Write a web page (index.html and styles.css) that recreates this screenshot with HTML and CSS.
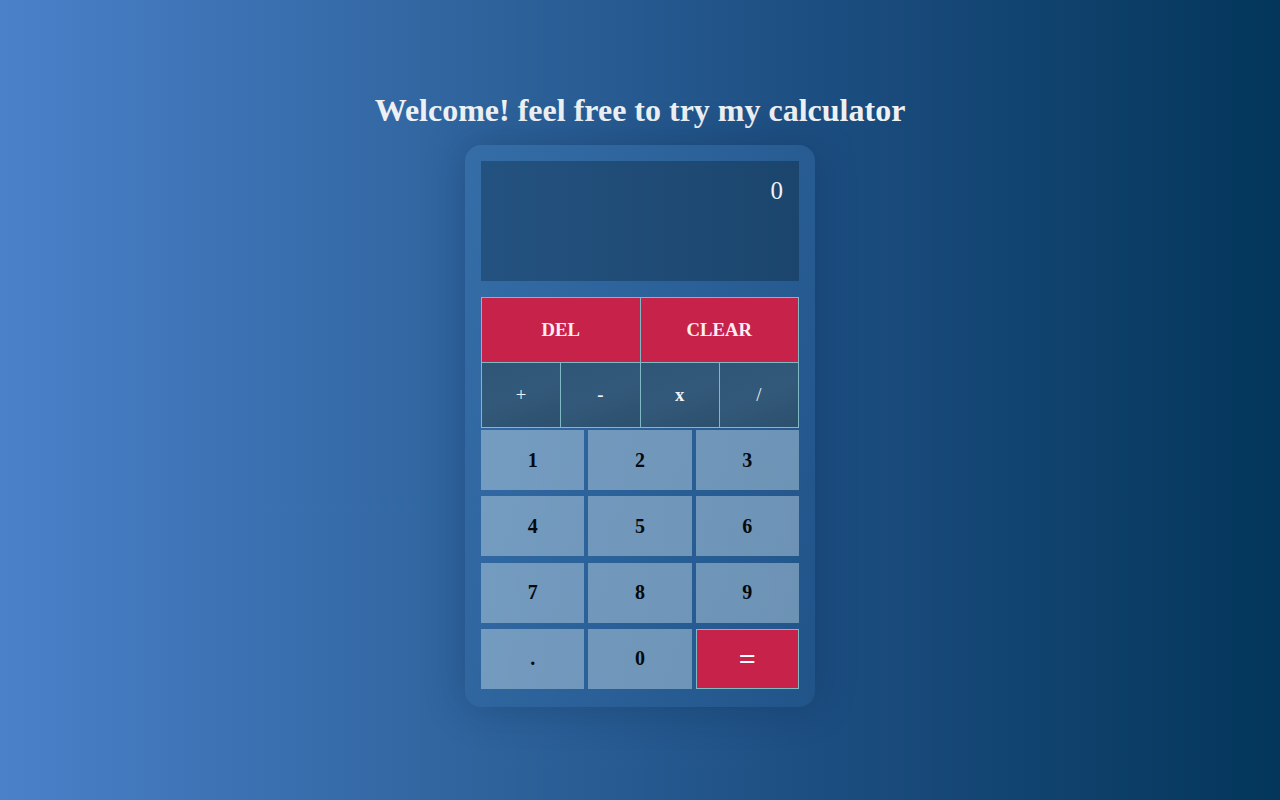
FILE: index.html
```html
<!DOCTYPE html>
<html lang="en">
<head>
<meta charset="utf-8">
<title>Calculator</title>
<link rel="stylesheet" href="styles.css">
</head>
<body>
  <h1 class="title">Welcome! feel free to try my calculator</h1>
  <div class="calc">
    <div class="display"><span class="display-value">0</span></div>
    <div class="ops">
      <button class="btn btn-red btn-wide">DEL</button>
      <button class="btn btn-red btn-wide">CLEAR</button>
      <button class="btn btn-op btn-plus">+</button>
      <button class="btn btn-op">-</button>
      <button class="btn btn-op">x</button>
      <button class="btn btn-op btn-plus">/</button>
    </div>
    <div class="nums">
      <button class="btn btn-num">1</button>
      <button class="btn btn-num">2</button>
      <button class="btn btn-num">3</button>
      <button class="btn btn-num">4</button>
      <button class="btn btn-num">5</button>
      <button class="btn btn-num">6</button>
      <button class="btn btn-num">7</button>
      <button class="btn btn-num">8</button>
      <button class="btn btn-num">9</button>
      <button class="btn btn-num">.</button>
      <button class="btn btn-num">0</button>
      <button class="btn btn-eq">=</button>
    </div>
  </div>
</body>
</html>
```

FILE: styles.css
```css
html, body {
  margin: 0;
  padding: 0;
}

body {
  min-height: 100vh;
  background: linear-gradient(to right, #4a81c9 0%, #2c6199 40%, #1c4d80 65%, #03365a 100%);
  font-family: "Liberation Serif", "Times New Roman", serif;
  display: flex;
  flex-direction: column;
  align-items: center;
}

.title {
  margin: 93px 0 17px;
  font-size: 32px;
  font-weight: bold;
  line-height: 35px;
  color: #eef1f4;
  text-align: center;
}

.calc {
  width: 318px;
  padding: 16px 16px 18px;
  border-radius: 16px;
  background: linear-gradient(135deg, rgba(60, 120, 180, 0.45), rgba(40, 95, 150, 0.35));
  box-shadow: 0 0 40px rgba(10, 30, 60, 0.28);
}

.display {
  height: 120px;
  box-sizing: border-box;
  padding: 16px 16px 0;
  margin-bottom: 16px;
  background: linear-gradient(90deg, #245280, #1e4a74 60%, #1b456c);
  text-align: right;
}

.display-value {
  font-size: 25px;
  line-height: 28px;
  color: #eef2f6;
}

.btn {
  font-family: "Liberation Serif", "Times New Roman", serif;
  border: none;
  margin: 0;
  padding: 0;
  cursor: pointer;
}

.ops {
  display: grid;
  grid-template-columns: repeat(4, 1fr);
  grid-template-rows: 64px 64px;
  gap: 1px;
  padding: 1px;
  background: #80b8c6;
  margin-bottom: 2px;
}

.btn-wide {
  grid-column: span 2;
}

.btn-red {
  background: #c7224a;
  color: #fbeef1;
  font-weight: bold;
  font-size: 18.7px;
}

.btn-op {
  background: linear-gradient(160deg, #2f5676, #33597a 50%, #2c506d);
  color: #f2f4f6;
  font-weight: bold;
  font-size: 18.7px;
}

.btn-plus {
  font-weight: normal;
}

.nums {
  display: grid;
  grid-template-columns: repeat(3, 1fr);
  grid-auto-rows: 60px;
  column-gap: 4px;
  row-gap: 6.33px;
}

.btn-num {
  background: rgba(200, 220, 230, 0.45);
  color: #050a10;
  font-weight: bold;
  font-size: 20px;
}

.btn-eq {
  background: #c7224a;
  border: 1px solid #80b8c6;
  color: #ffffff;
  font-size: 30px;
  font-weight: bold;
}
```
